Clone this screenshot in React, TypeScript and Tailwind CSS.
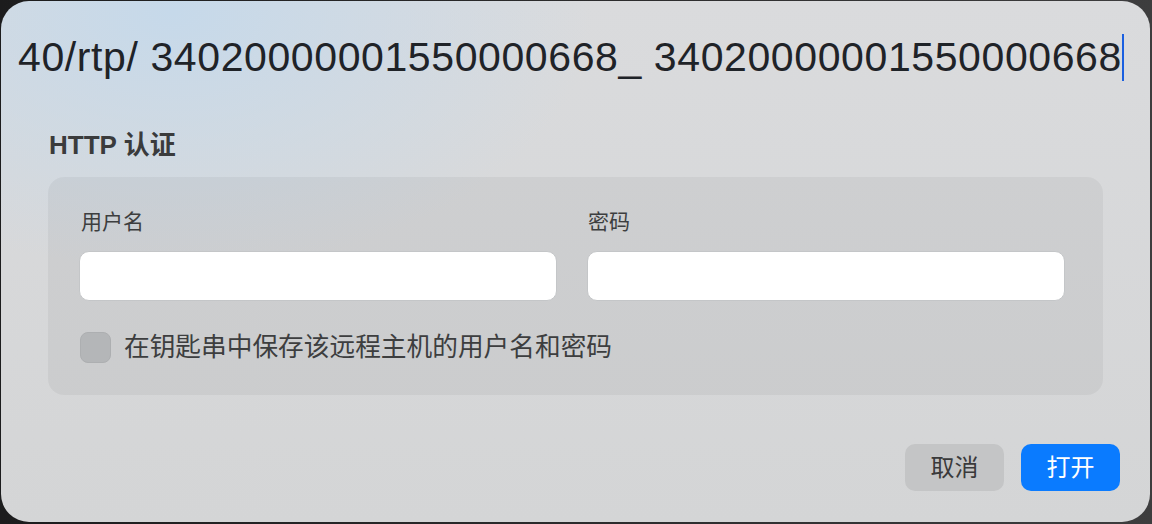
import React from "react";

const font = { fontFamily: '"Liberation Sans", "Noto Sans CJK SC", sans-serif' };

export default function App() {
  return (
    <div
      className="w-[1152px] h-[524px] bg-[linear-gradient(90deg,#1c1c1d,#2e2e2f_60%,#3d3d3e)] pt-[1px] pl-[1px] pr-[2px] pb-[2px]"
      style={font}
    >
      <div className="h-full w-full rounded-[28px] overflow-hidden flex flex-col bg-[radial-gradient(ellipse_420px_260px_at_15%_2%,#c6d9ea,rgba(214,216,219,0)),linear-gradient(180deg,#dadbdd,#d4d5d6)]">
        {/* Title / URL */}
        <div className="flex items-center pl-[17px] pt-[32px] h-[80px]">
          <span className="text-[41px] leading-[48px] tracking-[0.6px] text-[#1f2328] whitespace-nowrap">
            40/rtp/ 34020000001550000668_ 34020000001550000668
          </span>
          <span className="w-[2px] h-[47px] bg-[#1a5fe0]" />
        </div>

        {/* Heading */}
        <div className="pl-[48px] mt-[49px] h-[30px] flex items-center">
          <span className="text-[26px] leading-[30px] font-bold text-[#3a3b3c]">HTTP 认证</span>
        </div>

        {/* Panel */}
        <div className="mt-[17px] ml-[47px] mr-[47px] rounded-[16px] bg-black/[0.045] pt-[32px] pb-[32px] pl-[31px] pr-[38px]">
          <div className="grid grid-cols-2 gap-x-[30px]">
            <div className="flex flex-col">
              <span className="pl-[2px] text-[21px] leading-[26px] text-[#3d3e3f]">用户名</span>
              <div className="mt-[16px] h-[50px] rounded-[10px] bg-white border border-[#c4c6c8]" />
            </div>
            <div className="flex flex-col">
              <span className="pl-[1px] text-[21px] leading-[26px] text-[#3d3e3f]">密码</span>
              <div className="mt-[16px] h-[50px] rounded-[10px] bg-white border border-[#c4c6c8]" />
            </div>
          </div>
          <div className="mt-[31px] flex items-center h-[31px]">
            <div className="ml-[1px] w-[31px] h-[31px] rounded-[8px] bg-[#b4b6b8] border border-[#adafb1]" />
            <span className="ml-[13px] text-[25.7px] leading-[31px] text-[#3d3e3f] whitespace-nowrap">
              在钥匙串中保存该远程主机的用户名和密码
            </span>
          </div>
        </div>

        {/* Buttons */}
        <div className="mt-[49px] flex justify-end gap-[17px] pr-[30px]">
          <button className="w-[99px] h-[47px] rounded-[10px] bg-[#c4c5c6] text-[24px] text-[#3a3a3b] flex items-center justify-center">
            取消
          </button>
          <button className="w-[99px] h-[47px] rounded-[10px] bg-[#0a7bff] text-[24px] text-white flex items-center justify-center">
            打开
          </button>
        </div>
      </div>
    </div>
  );
}
